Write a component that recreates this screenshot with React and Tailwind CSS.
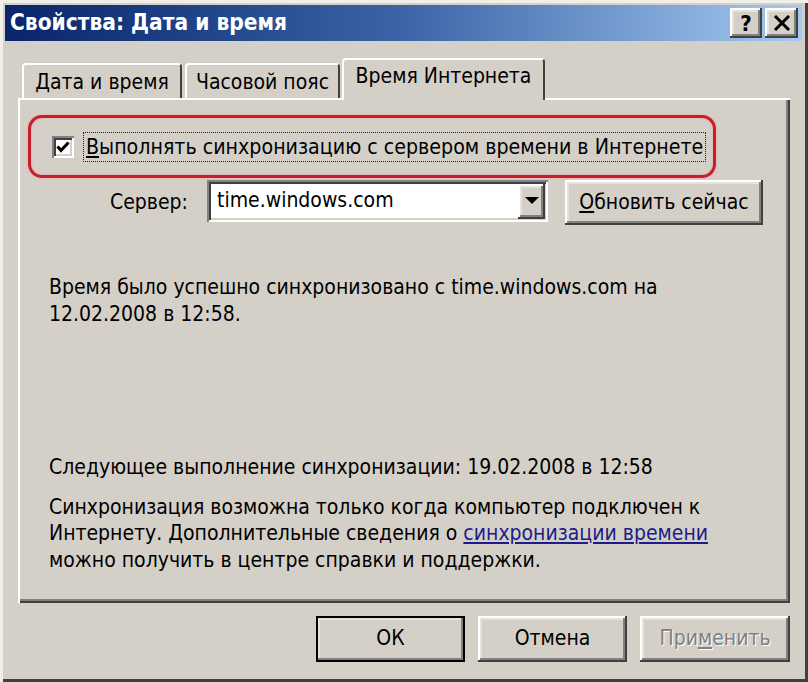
import React from 'react'

const font = "font-['DejaVu_Sans_Condensed','DejaVu_Sans',sans-serif]"

const raised =
  'bg-[#d4d0c8] shadow-[inset_-2px_-2px_0_#404040,inset_2px_2px_0_#ffffff,inset_-4px_-4px_0_#808080,inset_4px_4px_0_#e6e3dd]'
const sunken =
  'shadow-[inset_2px_2px_0_#808080,inset_-2px_-2px_0_#ffffff,inset_4px_4px_0_#404040,inset_-4px_-4px_0_#d4d0c8]'

function Tab({ label, active, className }) {
  return (
    <div
      className={`flex items-center justify-center rounded-t-[4px] border-l-2 border-t-2 border-r-2 border-l-white border-t-white border-r-[#404040] bg-[#d4d0c8] text-[21px] text-black ${
        active ? 'relative z-10 -mb-[2px] h-[42px] pb-[6px]' : 'h-[35px] pt-[2px]'
      } ${className}`}
    >
      {label}
    </div>
  )
}

function Button({ children, className = '', isDefault }) {
  return (
    <div
      className={`flex items-center justify-center text-[21px] ${raised} ${
        isDefault ? 'outline-2 outline-black -outline-offset-2' : ''
      } ${className}`}
    >
      {children}
    </div>
  )
}

export default function App() {
  return (
    <div
      className={`${font} h-[682px] w-[808px] overflow-hidden bg-[#d4d0c8] pl-[5px] pr-[6px] pt-[5px] text-black shadow-[inset_3px_3px_0_#f1efea,inset_-3px_-3px_0_#404040]`}
    >
      {/* title bar */}
      <div className="flex h-[36px] items-center bg-linear-to-r from-[#0a246a] via-[#3b65a8] to-[#a6caf0] pl-[5px] pr-[4px]">
        <span className="text-[22.5px] font-bold text-white">Свойства: Дата и время</span>
        <div className={`ml-auto flex h-[30px] w-[32px] items-center justify-center text-[22px] font-bold ${raised}`}>?</div>
        <div className={`ml-[3px] flex h-[30px] w-[33px] items-center justify-center ${raised}`}>
          <svg width="18" height="16" viewBox="0 0 18 16">
            <path d="M2 1 L16 15 M16 1 L2 15" stroke="#000" strokeWidth="3" />
          </svg>
        </div>
      </div>

      {/* tabs */}
      <div className="mt-[17px] flex h-[40px] items-end pl-[17px]">
        <Tab label="Дата и время" className="w-[160px]" />
        <Tab label="Часовой пояс" className="ml-[3px] w-[155px]" />
        <Tab label="Время Интернета" active className="ml-[2px] w-[203px]" />
      </div>

      {/* panel */}
      <div className="ml-[13px] flex h-[505px] w-[772px] flex-col shadow-[inset_2px_2px_0_#ffffff,inset_-2px_-2px_0_#404040,inset_-4px_-4px_0_#808080]">
        <div className="ml-[10px] mt-[17px] flex h-[63px] w-[688px] items-center rounded-[14px] border-[3px] border-[#c4202c] pl-[21px] shadow-[0_0_3px_#f5a0a0,inset_0_0_3px_#f5a0a0]">
          <div className={`flex h-[22px] w-[22px] items-center justify-center bg-white ${sunken}`}>
            <svg width="14" height="12" viewBox="0 0 14 12">
              <path d="M1.5 5.5 L5 9.5 L12.5 1.5" stroke="#000" strokeWidth="3" fill="none" />
            </svg>
          </div>
          <div className="ml-[9px] flex h-[30px] items-center border border-dotted border-[#222] px-[2px] text-[21.2px]">
            <span>
              <span className="underline underline-offset-2">В</span>ыполнять синхронизацию с сервером времени в Интернете
            </span>
          </div>
        </div>

        <div className="ml-[92px] mt-[2px] flex items-start">
          <div className="mt-[7px] w-[97px] text-[21px]">Сервер:</div>
          <div className={`flex h-[42px] w-[341px] items-center bg-white pl-[10px] pr-[3px] text-[21px] ${sunken}`}>
            <span>time.windows.com</span>
            <div className={`ml-auto flex h-[35px] w-[27px] items-center justify-center ${raised}`}>
              <svg width="14" height="8" viewBox="0 0 14 8">
                <path d="M0 0 H14 L7 7 Z" fill="#000" />
              </svg>
            </div>
          </div>
          <Button className="ml-[17px] h-[45px] w-[198px]">
            <span>
              <span className="underline underline-offset-2">О</span>бновить сейчас
            </span>
          </Button>
        </div>

        <p className="ml-[31px] mt-[49px] text-[21px] leading-[26.5px]">
          Время было успешно синхронизовано с time.windows.com на
          <br />
          12.02.2008 в 12:58.
        </p>

        <p className="ml-[31px] mt-[127px] text-[21px] leading-[26.5px]">
          Следующее выполнение синхронизации: 19.02.2008 в 12:58
        </p>

        <p className="ml-[31px] mt-[13px] text-[21px] leading-[26.5px]">
          Синхронизация возможна только когда компьютер подключен к
          <br />
          Интернету. Дополнительные сведения о{' '}
          <span className="text-[#1c1c8a] underline underline-offset-2">синхронизации времени</span>
          <br />
          можно получить в центре справки и поддержки.
        </p>
      </div>

      {/* bottom buttons */}
      <div className="mt-[13px] flex pl-[311px]">
        <Button isDefault className="h-[46px] w-[149px]">ОК</Button>
        <Button className="ml-[13px] h-[46px] w-[149px]">Отмена</Button>
        <Button className="ml-[13px] h-[46px] w-[150px] text-[#808080] [text-shadow:1px_1px_0_#ffffff]">
          <span>
            При<span className="underline underline-offset-2">м</span>енить
          </span>
        </Button>
      </div>
    </div>
  )
}
